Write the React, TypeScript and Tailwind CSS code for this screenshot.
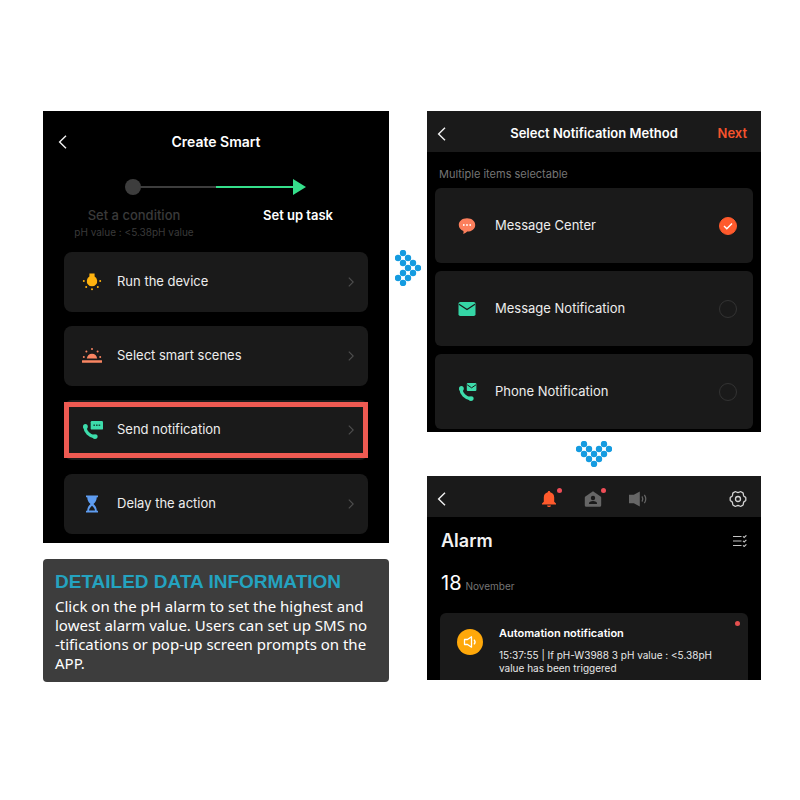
import type { ReactNode } from "react";

// grid cells of the dotted arrow, pointing right
const ARROW_DOTS = [
  [0, 1], [0, 5],
  [1, 0], [1, 2], [1, 4], [1, 6],
  [2, 1], [2, 3], [2, 5],
  [3, 2], [3, 4],
  [4, 3],
];

interface TaskProps {
  label: string;
  icon: ReactNode;
  highlighted?: boolean;
}

interface MethodProps {
  label: string;
  icon: ReactNode;
  checked?: boolean;
}

function BackIcon() {
  return (
    <svg width="10" height="14" viewBox="0 0 10 14" fill="none" stroke="#f2f2f2" strokeWidth="1.4">
      <path d="M8 0.8 1.6 7 8 13.2" />
    </svg>
  );
}

function ChevronIcon() {
  return (
    <svg width="6" height="10" viewBox="0 0 6 10" fill="none" stroke="#4d4d4d" strokeWidth="1.2">
      <path d="M0.8 0.6 5.2 5 0.8 9.4" />
    </svg>
  );
}

function BulbIcon() {
  return (
    <svg width="22" height="22" viewBox="0 0 22 22" fill="#ffb30f">
      <path d="M8.4 2.5h5.2v3.1a5.2 5.2 0 1 1-5.2 0z" />
      <circle cx="2.8" cy="10" r="1" />
      <circle cx="19.2" cy="10" r="1" />
      <circle cx="5.2" cy="15.9" r="1" />
      <circle cx="16.8" cy="15.9" r="1" />
      <circle cx="11" cy="18.3" r="1" />
    </svg>
  );
}

function SunriseIcon() {
  return (
    <svg width="22" height="22" viewBox="0 0 22 22" fill="#f98562">
      <path d="M5.8 13.4a5.3 5.8 0 0 1 10.4 0z" />
      <rect x="1" y="15.2" width="20" height="2.6" rx="0.4" />
      <circle cx="2.8" cy="12" r="1" />
      <circle cx="19.2" cy="12" r="1" />
      <circle cx="5.4" cy="6.6" r="1" />
      <circle cx="16.6" cy="6.6" r="1" />
      <circle cx="11" cy="4" r="1" />
    </svg>
  );
}

function Handset() {
  return (
    <g fill="#3ddcab">
      <path d="M3.9 7.6C4.1 12.6 8.3 17.2 13.8 17.8" fill="none" stroke="#3ddcab" strokeWidth="3.2" />
      <ellipse cx="4.4" cy="7.6" rx="2.4" ry="2.6" />
      <ellipse cx="14" cy="17.6" rx="2.6" ry="2.4" />
    </g>
  );
}

function PhoneChatIcon() {
  return (
    <svg width="22" height="22" viewBox="0 0 22 22">
      <Handset />
      <rect x="9.7" y="2" width="12.3" height="8.6" rx="1.2" fill="#3ddcab" />
      <path d="M12.4 6.3h1.6m1 0h1.6m1 0h1.6" stroke="#15513f" strokeWidth="1.4" />
    </svg>
  );
}

function HourglassIcon() {
  return (
    <svg width="22" height="22" viewBox="0 0 22 22">
      <path
        d="M5 2.4h12v1.900h-1.200c-.2 3.200-1.400 5-3.300 6.700 1.900 1.700 3.100 3.500 3.300 6.700H17v1.900H5v-1.900h1.200c.2-3.200 1.400-5 3.300-6.700-1.900-1.700-3.100-3.500-3.300-6.700H5z"
        fill="#5e9cf0"
      />
      <path d="M8 17.400c.4-2 1.500-3.300 3-4.600 1.500 1.300 2.600 2.600 3 4.600z" fill="#1a1a1a" />
    </svg>
  );
}

function BubbleIcon() {
  return (
    <svg width="20" height="20" viewBox="0 0 20 20">
      <path
        d="M10 2.2c4.900 0 8.200 2.900 8.200 6.700s-3.400 6.700-8 6.700c-1 .9-2.600 2-4 2.400.4-1 .5-2 .2-3.100C3.500 13.800 1.800 11.600 1.800 8.900c0-3.800 3.300-6.700 8.200-6.700z"
        fill="#fb7f5c"
      />
      <g fill="#fff">
        <circle cx="6.8" cy="9" r="0.9" />
        <circle cx="10" cy="9" r="0.9" />
        <circle cx="13.2" cy="9" r="0.9" />
      </g>
    </svg>
  );
}

function MailIcon() {
  return (
    <svg width="20" height="20" viewBox="0 0 20 20">
      <rect x="1.5" y="3" width="17" height="14" rx="1.8" fill="#35d6a6" />
      <path d="m2 5.200 8 5.300 8-5.300" fill="none" stroke="#1a1a1a" strokeWidth="1.2" />
    </svg>
  );
}

function PhoneMailIcon() {
  return (
    <svg width="20" height="20" viewBox="0 1 20 20">
      <Handset />
      <rect x="9.8" y="2" width="9.6" height="8" rx="1" fill="#3ddcab" />
      <path d="m10.200 3.800 4.400 3 4.400-3" fill="none" stroke="#1a1a1a" />
    </svg>
  );
}

function BellIcon() {
  return (
    <svg width="18" height="18" viewBox="0 0 18 18" fill="#ff5a2c">
      <path d="M9 1c.8 0 1.200.5 1.200 1.200 2.500.6 4 2.600 4 5.200v4.400l1.800 1.700v.9H2v-.9l1.800-1.700V7.400c0-2.600 1.500-4.600 4-5.200C7.800 1.500 8.200 1 9 1z" />
      <path d="M7 15.400h4c-.2 1-1 1.600-2 1.600s-1.800-.6-2-1.600z" />
    </svg>
  );
}

function HomeUserIcon() {
  return (
    <svg width="18" height="18" viewBox="0 0 18 18">
      <path d="M9 1.200 16.600 6.600c.4.300.6.700.6 1.200v7.500c0 .9-.6 1.500-1.500 1.500H2.300c-.9 0-1.500-.6-1.500-1.500V7.800c0-.5.2-.9.6-1.200z" fill="#666" />
      <circle cx="9" cy="8" r="2.2" fill="#1a1a1a" />
      <path d="M4.900 13.900c0-2.200 1.700-3 4.100-3s4.100.8 4.100 3z" fill="#1a1a1a" />
    </svg>
  );
}

function SpeakerIcon() {
  return (
    <svg width="20" height="18" viewBox="0 0 20 18">
      <path d="M1 4.800h4.800l6-3.400v15.200l-6-3.400H1z" fill="#666" />
      <path d="M14 6.400c1 1.600 1 3.600 0 5.200M16.400 4.800c1.700 2.600 1.700 5.800 0 8.400" fill="none" stroke="#666" strokeWidth="1.2" />
    </svg>
  );
}

function GearIcon() {
  return (
    <svg width="18" height="18" viewBox="0 0 18 18" fill="none" stroke="#d4d4d4" strokeWidth="1.3">
      <path d="M6 1.800c.9-.5 1.500.7 3 .7s2.100-1.200 3-.7l1.900 1.100c.9.600.1 1.600.8 2.900.8 1.200 2.100 1 2.100 2v2.400c0 1-1.300.8-2.100 2-.7 1.300.1 2.300-.8 2.900L12 16.200c-.9.5-1.500-.7-3-.7s-2.100 1.200-3 .7l-1.900-1.100c-.9-.6-.1-1.600-.8-2.900-.8-1.200-2.100-1-2.100-2V7.800c0-1 1.300-.8 2.100-2 .7-1.300-.1-2.300.8-2.900z" />
      <circle cx="9" cy="9" r="2.500" />
    </svg>
  );
}

function ChecklistIcon() {
  return (
    <svg width="14" height="12" viewBox="0 0 14 12" fill="none" stroke="#c4c4c4" strokeWidth="1.1">
      <path d="M0 1.500h8.500M0 6h8.500M0 10.500h8.500" />
      <path d="m10 1.300 1.200 1.200 2.200-2.200M10 5.800 11.200 7l2.200-2.200M10 10.300l1.200 1.200 2.200-2.200" />
    </svg>
  );
}

function AlarmIcon() {
  return (
    <svg width="26" height="26" viewBox="0 0 26 26">
      <circle cx="13" cy="13" r="13" fill="#ffa80a" />
      <g fill="none" stroke="#fff" strokeWidth="1.3" strokeLinejoin="round">
        <path d="M7.500 10.500h3l4-2.700v10.400l-4-2.700h-3z" />
        <path d="M17 10.600c1.300 1.400 1.300 3.400 0 4.800" />
      </g>
    </svg>
  );
}

function DotArrow({ down }: { down?: boolean }) {
  return (
    <svg width={down ? 36 : 26} height={down ? 26 : 36} fill="#149be0" aria-hidden="true">
      {ARROW_DOTS.map(([a, b]) => (
        <circle
          key={`${a}-${b}`}
          cx={3 + 5 * (down ? b : a)}
          cy={3 + 5 * (down ? a : b)}
          r="3.2"
        />
      ))}
    </svg>
  );
}

function TaskRow({ label, icon, highlighted }: TaskProps) {
  return (
    <button type="button" className="relative flex h-[60px] w-full items-center rounded-lg bg-[#1a1a1a] pl-[17px] pr-3.5 text-left">
      {icon}
      <span className="ml-3.5 flex-1 text-[13px] text-[#ededed]">{label}</span>
      <ChevronIcon />
      {highlighted && <span className="absolute inset-x-0 inset-y-0.5 border-5 border-[#ee5a52]" />}
    </button>
  );
}

function MethodRow({ label, icon, checked }: MethodProps) {
  return (
    <label className="relative flex h-[75px] items-center rounded-md bg-[#1a1a1a] pl-[22px] pr-4">
      {icon}
      <span className="ml-[18px] flex-1 text-[13px] text-[#ededed]">{label}</span>
      <input type="checkbox" defaultChecked={checked} className="peer sr-only" />
      <span className="flex size-[18px] items-center justify-center rounded-full border border-[#333] text-transparent peer-checked:border-[#ff5a2c] peer-checked:bg-[#ff5a2c] peer-checked:text-white">
        <svg width="10" height="8" viewBox="0 0 10 8" fill="none" stroke="currentColor" strokeWidth="1.4">
          <path d="m1 4 2.800 2.700L9 1.500" />
        </svg>
      </span>
    </label>
  );
}

function CreateSmart() {
  return (
    <section className="bg-black px-[21px] pb-[9px]">
      <header className="grid h-[62px] grid-cols-[1fr_auto_1fr] items-center">
        <button type="button" aria-label="Back" className="-ml-1.5 w-fit"><BackIcon /></button>
        <h1 className="text-sm font-semibold text-white">Create Smart</h1>
      </header>
      <svg className="mx-auto mt-1.5 block" width="182" height="16" viewBox="0 0 182 16">
        <path d="M8 8h83" stroke="#3d3d3d" strokeWidth="2" />
        <circle cx="8" cy="8" r="8" fill="#3d3d3d" />
        <path d="M91 8h80" stroke="#35df8b" strokeWidth="2" />
        <path d="M168 0l13 8-13 8z" fill="#35df8b" />
      </svg>
      <div className="mt-2.5 flex h-[47px] justify-between">
        <div className="w-[140px] text-center text-[#3a3a3a]">
          <p className="text-[13px] leading-5 font-medium">Set a condition</p>
          <p className="text-[10px] leading-3.5">pH value : &lt;5.38pH value</p>
        </div>
        <p className="w-[140px] text-center text-[13px] leading-5 font-semibold text-white">Set up task</p>
      </div>
      <div className="flex flex-col gap-3.5">
        <TaskRow label="Run the device" icon={<BulbIcon />} />
        <TaskRow label="Select smart scenes" icon={<SunriseIcon />} />
        <TaskRow label="Send notification" icon={<PhoneChatIcon />} highlighted />
        <TaskRow label="Delay the action" icon={<HourglassIcon />} />
      </div>
    </section>
  );
}

function SelectMethod() {
  return (
    <section className="bg-black">
      <header className="grid h-[41px] grid-cols-[1fr_auto_1fr] items-center bg-[#1a1a1a] px-3.5 pt-1">
        <button type="button" aria-label="Back" className="-ml-1 w-fit"><BackIcon /></button>
        <h2 className="text-[13px] font-semibold text-white">Select Notification Method</h2>
        <button type="button" className="justify-self-end text-[13px] font-semibold text-[#f5532d]">Next</button>
      </header>
      <div className="px-2 pb-[3px]">
        <p className="h-9 pt-3.5 pl-1 text-[11px] leading-4 text-[#757575]">Multiple items selectable</p>
        <div className="flex flex-col gap-2">
          <MethodRow label="Message Center" icon={<BubbleIcon />} checked />
          <MethodRow label="Message Notification" icon={<MailIcon />} />
          <MethodRow label="Phone Notification" icon={<PhoneMailIcon />} />
        </div>
      </div>
    </section>
  );
}

function AlarmPanel() {
  return (
    <section className="bg-black">
      <header className="grid h-[41px] grid-cols-[1fr_auto_1fr] items-center bg-[#1a1a1a] px-3.5 pt-1">
        <button type="button" aria-label="Back" className="-ml-1 w-fit"><BackIcon /></button>
        <nav className="flex gap-[26px]">
          <button type="button" aria-label="Alarm" className="relative">
            <BellIcon />
            <span className="absolute -top-0.5 -right-1 size-[5px] rounded-full bg-[#ef4d57]" />
          </button>
          <button type="button" aria-label="Home" className="relative">
            <HomeUserIcon />
            <span className="absolute -top-0.5 -right-1 size-[5px] rounded-full bg-[#ef4d57]" />
          </button>
          <button type="button" aria-label="Bulletin"><SpeakerIcon /></button>
        </nav>
        <button type="button" aria-label="Settings" className="justify-self-end"><GearIcon /></button>
      </header>
      <div className="px-3.5">
        <div className="flex h-12 items-center justify-between">
          <h2 className="text-lg font-semibold text-[#f2f2f2]">Alarm</h2>
          <button type="button" aria-label="Edit list"><ChecklistIcon /></button>
        </div>
        <p className="flex h-12 items-baseline gap-1 pt-1 text-xl text-white">
          18 <span className="text-[10px] text-[#757575]">November</span>
        </p>
      </div>
      <article className="relative mx-[13px] flex h-[67px] gap-4 rounded-t-md bg-[#1a1a1a] pt-3 pr-3 pl-[17px]">
        <div className="shrink-0 pt-1"><AlarmIcon /></div>
        <div className="text-white">
          <h3 className="text-[11px] leading-4 font-semibold">Automation notification</h3>
          <p className="mt-2 text-[10px] leading-[13px] text-[#e8e8e8]">
            15:37:55 | If pH-W3988 3 pH value : &lt;5.38pH
            <br />
            value has been triggered
          </p>
        </div>
        <span className="absolute top-2 right-2 size-[5px] rounded-full bg-[#e5504f]" />
      </article>
    </section>
  );
}

export default function App() {
  return (
    <main className="flex min-h-screen bg-white pt-[111px] pr-[39px] pb-6 pl-[43px] font-['Inter',sans-serif]">
      <div className="min-w-0 flex-[346]">
        <CreateSmart />
        <section className="mt-4 rounded-[4px] bg-[#3d3d3d] px-3 pt-[11px] pb-[9px]">
          <h2 className="font-['Liberation_Sans',Arial,sans-serif] text-[19px] leading-6 font-bold whitespace-nowrap text-[#24a3c0]">
            DETAILED DATA INFORMATION
          </h2>
          <p className="mt-[3px] font-['Noto_Sans',sans-serif] text-[15px] leading-[19px] whitespace-nowrap text-white">
            Click on the pH alarm to set the highest and
            <br />
            lowest alarm value. Users can set up SMS no
            <br />
            -tifications or pop-up screen prompts on the
            <br />
            APP.
          </p>
        </section>
      </div>
      <div className="flex w-[38px] shrink-0 justify-center pt-[139px]">
        <DotArrow />
      </div>
      <div className="min-w-0 flex-[334]">
        <SelectMethod />
        <div className="flex h-11 items-center justify-center">
          <DotArrow down />
        </div>
        <AlarmPanel />
      </div>
    </main>
  );
}
